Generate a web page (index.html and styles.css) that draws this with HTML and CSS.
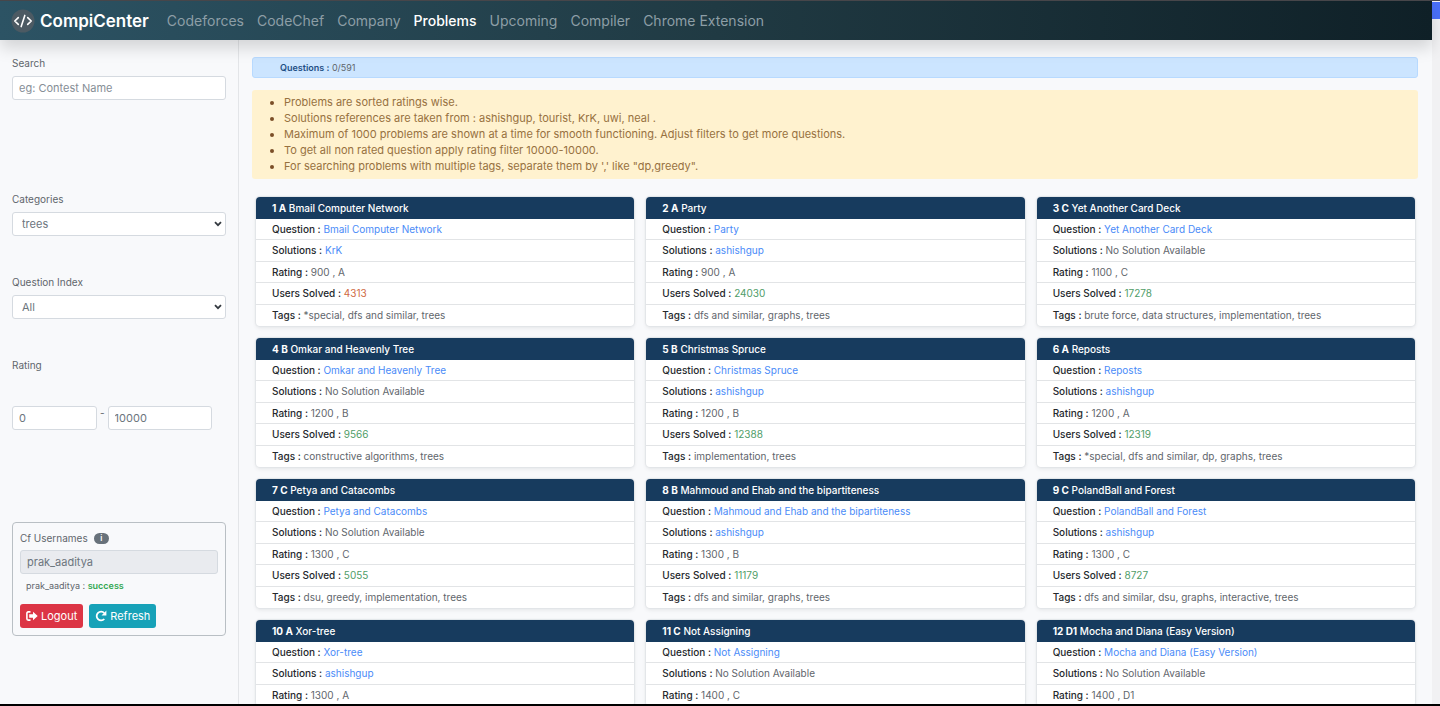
FILE: index.html
```html
<!DOCTYPE html>
<html lang="en">
<head>
<meta charset="utf-8">
<meta name="viewport" content="width=device-width, initial-scale=1">
<title>CompiCenter</title>
<link rel="stylesheet" href="styles.css">
</head>
<body>
<div class="window">
<div class="page">
  <header class="navbar">
    <a class="brand" href="#">
      <svg class="brand-logo" viewBox="0 0 24 24" width="24" height="24" aria-hidden="true"><circle cx="12" cy="12" r="11.5" fill="#4c5a63"/><path d="M7.3 8.6 3.8 12l3.5 3.4M16.7 8.6l3.5 3.4-3.5 3.4M13.8 6.4l-3.6 11.2" fill="none" stroke="#fff" stroke-width="1.6" stroke-linecap="round" stroke-linejoin="round"/></svg>
      <span>CompiCenter</span>
    </a>
    <nav class="nav-links">
      <a href="#">Codeforces</a>
      <a href="#">CodeChef</a>
      <a href="#">Company</a>
      <a class="active" href="#">Problems</a>
      <a href="#">Upcoming</a>
      <a href="#">Compiler</a>
      <a href="#">Chrome Extension</a>
    </nav>
  </header>
  <div class="content">
    <aside class="sidebar">
      <div class="field field-search">
        <label for="search">Search</label>
        <input class="control" id="search" type="text" placeholder="eg: Contest Name">
      </div>
      <div class="field field-select">
        <label for="category">Categories</label>
        <span class="select-wrap">
          <select class="control" id="category"><option>trees</option></select>
          <svg class="chevron" viewBox="0 0 8 6" width="8" height="6" aria-hidden="true"><path d="M1 1.2 4 4.2 7 1.2" fill="none" stroke="#343a40" stroke-width="1.8"/></svg>
        </span>
      </div>
      <div class="field field-select">
        <label for="index">Question Index</label>
        <span class="select-wrap">
          <select class="control" id="index"><option>All</option></select>
          <svg class="chevron" viewBox="0 0 8 6" width="8" height="6" aria-hidden="true"><path d="M1 1.2 4 4.2 7 1.2" fill="none" stroke="#343a40" stroke-width="1.8"/></svg>
        </span>
      </div>
      <div class="field field-rating">
        <label for="rating-min">Rating</label>
        <div class="range">
          <input class="control range-min" id="rating-min" type="text" value="0">
          <span>-</span>
          <input class="control range-max" type="text" value="10000" aria-label="Maximum rating">
        </div>
      </div>
      <section class="account">
        <div class="account-title">
          <label for="handle">Cf Usernames</label>
          <span class="info">i</span>
        </div>
        <input class="control" id="handle" type="text" value="prak_aaditya" disabled>
        <p class="status">prak_aaditya : <strong>success</strong></p>
        <div class="actions">
          <button class="btn btn-danger" type="button"><svg viewBox="0 0 12 10" width="12" height="10" aria-hidden="true"><path d="M4.5.9H2.2C1.4.9.9 1.4.9 2.2v5.6c0 .8.5 1.3 1.3 1.3h2.3" fill="none" stroke="#fff" stroke-width="1.6"/><path d="M7 .8 11.7 5 7 9.2V6.7H3.2V3.3H7z" fill="#fff"/></svg>Logout</button>
          <button class="btn btn-info" type="button"><svg viewBox="0 0 12 12" width="12" height="12" aria-hidden="true"><path d="M9.3 9A4.4 4.4 0 1 1 9.3 3" fill="none" stroke="#fff" stroke-width="1.8"/><path d="M11.4.6v4.9H6.5z" fill="#fff"/></svg>Refresh</button>
        </div>
      </section>
    </aside>
    <main class="main">
      <div class="counter"><strong>Questions :</strong> <span>0/591</span></div>
      <ul class="notes">
        <li>Problems are sorted ratings wise.</li>
        <li>Solutions references are taken from : ashishgup, tourist, KrK, uwi, neal .</li>
        <li>Maximum of 1000 problems are shown at a time for smooth functioning. Adjust filters to get more questions.</li>
        <li>To get all non rated question apply rating filter 10000-10000.</li>
        <li>For searching problems with multiple tags, separate them by ',' like "dp,greedy".</li>
      </ul>
      <div class="cards">
        <article class="card"><h2><b>1 A</b> Bmail Computer Network</h2><ul>
          <li><b>Question :</b> <a href="#">Bmail Computer Network</a></li>
          <li><b>Solutions :</b> <a href="#">KrK</a></li>
          <li><b>Rating :</b> 900 , A</li>
          <li><b>Users Solved :</b> <span class="low">4313</span></li>
          <li><b>Tags :</b> *special, dfs and similar, trees</li></ul></article>
        <article class="card"><h2><b>2 A</b> Party</h2><ul>
          <li><b>Question :</b> <a href="#">Party</a></li>
          <li><b>Solutions :</b> <a href="#">ashishgup</a></li>
          <li><b>Rating :</b> 900 , A</li>
          <li><b>Users Solved :</b> <span class="high">24030</span></li>
          <li><b>Tags :</b> dfs and similar, graphs, trees</li></ul></article>
        <article class="card"><h2><b>3 C</b> Yet Another Card Deck</h2><ul>
          <li><b>Question :</b> <a href="#">Yet Another Card Deck</a></li>
          <li><b>Solutions :</b> No Solution Available</li>
          <li><b>Rating :</b> 1100 , C</li>
          <li><b>Users Solved :</b> <span class="high">17278</span></li>
          <li><b>Tags :</b> brute force, data structures, implementation, trees</li></ul></article>
        <article class="card"><h2><b>4 B</b> Omkar and Heavenly Tree</h2><ul>
          <li><b>Question :</b> <a href="#">Omkar and Heavenly Tree</a></li>
          <li><b>Solutions :</b> No Solution Available</li>
          <li><b>Rating :</b> 1200 , B</li>
          <li><b>Users Solved :</b> <span class="high">9566</span></li>
          <li><b>Tags :</b> constructive algorithms, trees</li></ul></article>
        <article class="card"><h2><b>5 B</b> Christmas Spruce</h2><ul>
          <li><b>Question :</b> <a href="#">Christmas Spruce</a></li>
          <li><b>Solutions :</b> <a href="#">ashishgup</a></li>
          <li><b>Rating :</b> 1200 , B</li>
          <li><b>Users Solved :</b> <span class="high">12388</span></li>
          <li><b>Tags :</b> implementation, trees</li></ul></article>
        <article class="card"><h2><b>6 A</b> Reposts</h2><ul>
          <li><b>Question :</b> <a href="#">Reposts</a></li>
          <li><b>Solutions :</b> <a href="#">ashishgup</a></li>
          <li><b>Rating :</b> 1200 , A</li>
          <li><b>Users Solved :</b> <span class="high">12319</span></li>
          <li><b>Tags :</b> *special, dfs and similar, dp, graphs, trees</li></ul></article>
        <article class="card"><h2><b>7 C</b> Petya and Catacombs</h2><ul>
          <li><b>Question :</b> <a href="#">Petya and Catacombs</a></li>
          <li><b>Solutions :</b> No Solution Available</li>
          <li><b>Rating :</b> 1300 , C</li>
          <li><b>Users Solved :</b> <span class="high">5055</span></li>
          <li><b>Tags :</b> dsu, greedy, implementation, trees</li></ul></article>
        <article class="card"><h2><b>8 B</b> Mahmoud and Ehab and the bipartiteness</h2><ul>
          <li><b>Question :</b> <a href="#">Mahmoud and Ehab and the bipartiteness</a></li>
          <li><b>Solutions :</b> <a href="#">ashishgup</a></li>
          <li><b>Rating :</b> 1300 , B</li>
          <li><b>Users Solved :</b> <span class="high">11179</span></li>
          <li><b>Tags :</b> dfs and similar, graphs, trees</li></ul></article>
        <article class="card"><h2><b>9 C</b> PolandBall and Forest</h2><ul>
          <li><b>Question :</b> <a href="#">PolandBall and Forest</a></li>
          <li><b>Solutions :</b> <a href="#">ashishgup</a></li>
          <li><b>Rating :</b> 1300 , C</li>
          <li><b>Users Solved :</b> <span class="high">8727</span></li>
          <li><b>Tags :</b> dfs and similar, dsu, graphs, interactive, trees</li></ul></article>
        <article class="card"><h2><b>10 A</b> Xor-tree</h2><ul>
          <li><b>Question :</b> <a href="#">Xor-tree</a></li>
          <li><b>Solutions :</b> <a href="#">ashishgup</a></li>
          <li><b>Rating :</b> 1300 , A</li></ul></article>
        <article class="card"><h2><b>11 C</b> Not Assigning</h2><ul>
          <li><b>Question :</b> <a href="#">Not Assigning</a></li>
          <li><b>Solutions :</b> No Solution Available</li>
          <li><b>Rating :</b> 1400 , C</li></ul></article>
        <article class="card"><h2><b>12 D1</b> Mocha and Diana (Easy Version)</h2><ul>
          <li><b>Question :</b> <a href="#">Mocha and Diana (Easy Version)</a></li>
          <li><b>Solutions :</b> No Solution Available</li>
          <li><b>Rating :</b> 1400 , D1</li></ul></article>
      </div>
    </main>
  </div>
</div>
<div class="scroll-track"><div class="scroll-thumb"></div></div>
</div>
</body>
</html>
```
FILE: styles.css
```css
* { box-sizing: border-box; }

body {
  margin: 0;
  background: #f8f9fb;
  color: #5f666c;
  font: 11px/20px Inter, "Open Sans", sans-serif;
}

a { text-decoration: none; }

.window {
  display: flex;
  height: 100vh;
  overflow: hidden;
  border-top: 1px solid #47464a;
  border-bottom: 2px solid #000;
}

.page {
  display: flex;
  flex: 1;
  flex-direction: column;
  min-width: 0;
}

.scroll-track {
  width: 8px;
  padding-top: 1px;
  background: #f1f1f3;
}

.scroll-thumb { height: 17px; background: #4a70f8; }

/* Top navigation */
.navbar {
  z-index: 1;
  display: flex;
  flex: none;
  align-items: center;
  gap: 18px;
  height: 39px;
  padding: 0 12px 0 11px;
  background: linear-gradient(to right, #2c5364, #203a43, #0f2027);
  box-shadow: 0 8px 16px rgba(0, 0, 0, 0.15);
}

.brand {
  display: flex;
  align-items: center;
  gap: 5px;
  color: #fff;
  font-size: 17px;
  font-weight: 600;
}

.nav-links { display: flex; gap: 13px; }

.nav-links a { color: #8d9ea6; font-size: 14px; }

.nav-links .active { color: #fff; font-weight: 500; }

.content { display: flex; flex: 1; min-height: 0; }

/* Filters */
.sidebar {
  flex: none;
  width: 239px;
  padding: 13px 12px;
  border-right: 1px solid #e3e5e8;
  font-size: 10px;
}

.field { display: flex; flex-direction: column; gap: 3px; }
.field-search { height: 136px; }
.field-select { height: 83px; }
.field-rating { height: 167px; gap: 31px; }

.control {
  width: 100%;
  height: 24px;
  padding: 0 6px;
  border: 1px solid #d5dae0;
  border-radius: 3px;
  background: #fff;
  color: #6c757d;
  font: 11px Inter, "Open Sans", sans-serif;
}

.control::placeholder { color: #868e96; opacity: 1; }
.control:disabled { background: #e9ebef; }

.select-wrap { display: grid; align-items: center; }

.select-wrap > * { grid-area: 1 / 1; }

.select-wrap select { padding-left: 9px; appearance: none; }

.chevron { justify-self: end; margin-right: 4px; pointer-events: none; }

.range { display: flex; gap: 3px; line-height: 14px; }
.range-min { width: 85px; }
.range-max { width: 104px; }

.account {
  padding: 5px 7px 7px;
  border: 1px solid #b9bfc4;
  border-radius: 4px;
}

.account-title { display: flex; align-items: center; gap: 6px; margin-bottom: 2px; }

.info {
  width: 15px;
  height: 11px;
  border-radius: 6px;
  background: #67717a;
  color: #fff;
  font-size: 8px;
  font-weight: 600;
  line-height: 11px;
  text-align: center;
}

.status { margin: 2px 6px 8px; font-size: 9px; }
.status strong { color: #34a853; font-weight: 600; }

.actions { display: flex; gap: 6px; }

.btn {
  display: flex;
  align-items: center;
  gap: 3px;
  height: 24px;
  padding: 0 6px;
  border: 0;
  border-radius: 3px;
  color: #fff;
  font: 11px Inter, "Open Sans", sans-serif;
}

.btn-danger { background: #dc3545; }
.btn-info { background: #17a2b8; }

/* Problem list */
.main {
  flex: 1;
  min-width: 0;
  padding: 17px 14px 0 13px;
  overflow: hidden;
}

.counter {
  height: 21px;
  padding: 0 27px;
  border: 1px solid #b8daff;
  border-radius: 3px;
  background: #cce5ff;
  font-size: 9px;
  line-height: 19px;
}

.counter strong { color: #1f4f85; font-weight: 600; }

.notes {
  margin: 12px 0 18px;
  padding: 4px 16px 5px 32px;
  border-radius: 3px;
  background: #fff2cf;
  color: #97713f;
  font-size: 11px;
  line-height: 16px;
}

.notes li::marker { color: #7b4f28; }

.cards {
  display: grid;
  grid-template-columns: repeat(3, minmax(0, 1fr));
  gap: 12px;
  padding: 0 3px 0 4px;
}

.card {
  border-radius: 4px;
  background: #fff;
  box-shadow: 0 0 1px 1px #e2e5e8, 0 2px 4px rgba(0, 0, 0, 0.08);
}

.card h2 {
  margin: 0;
  padding: 0 16px;
  border-radius: 4px 4px 0 0;
  background: #173b5e;
  color: #fff;
  font-size: 10px;
  font-weight: 500;
  line-height: 22px;
}

.card h2 b { font-weight: 700; }

.card ul { margin: 0; padding: 0; list-style: none; }

.card li {
  height: 21px;
  padding: 0 16px;
  border-bottom: 1px solid #e2e4e6;
  font-size: 10px;
}

.card li:nth-child(even) { height: 22px; }
.card li:last-child { border-bottom: 0; }
.card li b { color: #24282c; font-weight: 500; }
.card a { color: #4a8bf8; }
.low { color: #cf6a43; }
.high { color: #4f9d68; }
```
